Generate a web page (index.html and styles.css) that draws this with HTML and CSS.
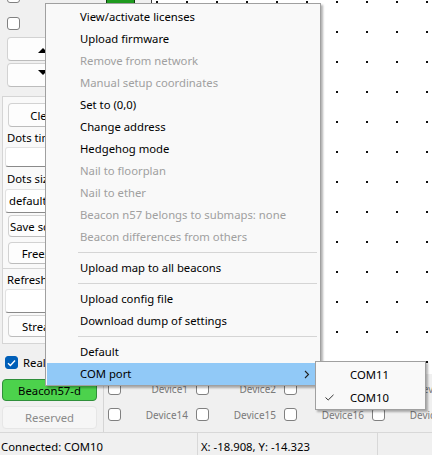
FILE: index.html
```html
<!DOCTYPE html>
<html>

	<head>
		<meta charset="UTF-8">
		<title>Dashboard</title>
		<link rel="stylesheet" href="styles.css">
	</head>

	<body>
		<div class="app">
			<div class="side">
				<div class="top">
					<span class="chk first"></span>
					<span class="chk"></span>
					<div class="btn arrow"><span class="tri up"></span></div>
					<div class="btn arrow"><span class="tri down"></span></div>
				</div>
				<div class="group">
					<div class="btn clear">Clear</div>
					<div class="lbl">Dots time</div>
					<div class="field small"></div>
					<div class="lbl">Dots size</div>
					<div class="field combo">default</div>
					<div class="btn save">Save screenshot</div>
					<div class="btn freeze">Freeze</div>
				</div>
				<div class="group last">
					<div class="lbl">Refresh</div>
					<div class="field"></div>
					<div class="btn stream">Stream</div>
				</div>
				<div class="check-row">
					<span class="chk on">
						<svg width="9" height="8" viewBox="0 0 9 8"><path d="M1 4.2 L3.4 6.4 L8 1.5" fill="none" stroke="#fff" stroke-width="1.4"/></svg>
					</span>
					<span>Realtime</span>
				</div>
				<div class="beacon">Beacon57-d</div>
				<div class="reserved">Reserved</div>
			</div>

			<div class="main">
				<div class="view">
					<div class="tools"><span class="green"></span></div>
					<div class="canvas"></div>
				</div>
				<div class="devices">
					<div class="dev-row">
						<div class="dev"><span class="chk"></span><span class="name">Device1</span></div>
						<div class="dev"><span class="chk"></span><span class="name">Device2</span></div>
						<div class="dev"><span class="chk"></span><span class="name">Device3</span></div>
						<div class="dev"><span class="chk"></span><span class="name">Device4</span></div>
					</div>
					<div class="dev-row">
						<div class="dev"><span class="chk"></span><span class="name">Device14</span></div>
						<div class="dev"><span class="chk"></span><span class="name">Device15</span></div>
						<div class="dev"><span class="chk"></span><span class="name">Device16</span></div>
						<div class="dev"><span class="chk"></span><span class="name">Device17</span></div>
					</div>
				</div>
			</div>

			<div class="status">
				<div class="sb-cell conn">Connected: COM10</div>
				<div class="sb-cell pos">X: -18.908, Y: -14.323</div>
				<div class="sb-cell"></div>
			</div>
		</div>

		<!-- context menu of the beacon -->
		<div class="menu">
			<div class="item">View/activate licenses</div>
			<div class="item">Upload firmware</div>
			<div class="item off">Remove from network</div>
			<div class="item off">Manual setup coordinates</div>
			<div class="item">Set to (0,0)</div>
			<div class="item">Change address</div>
			<div class="item">Hedgehog mode</div>
			<div class="item off">Nail to floorplan</div>
			<div class="item off">Nail to ether</div>
			<div class="item off">Beacon n57 belongs to submaps: none</div>
			<div class="item off">Beacon differences from others</div>
			<div class="sep"></div>
			<div class="item">Upload map to all beacons</div>
			<div class="sep"></div>
			<div class="item">Upload config file</div>
			<div class="item">Download dump of settings</div>
			<div class="sep"></div>
			<div class="item">Default</div>
			<div class="item hover">COM port
				<svg class="more" width="6" height="9" viewBox="0 0 6 9"><path d="M1 1 L4.5 4.5 L1 8" fill="none" stroke="#222" stroke-width="1.1"/></svg>
			</div>
		</div>

		<div class="submenu">
			<div class="item"><span class="mark"></span>COM11</div>
			<div class="item"><span class="mark"><svg width="9" height="7" viewBox="0 0 9 7"><path d="M0.5 3.5 L3.2 6 L8.5 0.8" fill="none" stroke="#333" stroke-width="1"/></svg></span>COM10</div>
		</div>
	</body>

</html>
```

FILE: styles.css
```css
* {
	box-sizing: border-box;
}

body {
	margin: 0;
	width: 432px;
	height: 455px;
	overflow: hidden;
	position: relative;
	background: #f0f0f0;
	color: #000;
	font-family: "Noto Sans", "DejaVu Sans", sans-serif;
	font-size: 11.3px;
}

.app {
	display: grid;
	grid-template-columns: 103px 1fr;
	grid-template-rows: 432px 23px;
	height: 455px;
}

/* left panel */
.side {
	display: flex;
	flex-direction: column;
	align-items: flex-start;
	overflow: hidden;
}

.top {
	height: 96px;
	padding-left: 7px;
	display: flex;
	flex-direction: column;
	align-items: flex-start;
}

.chk {
	display: block;
	flex: none;
	width: 13px;
	height: 13px;
	border: 1px solid #808080;
	border-radius: 3px;
	background: #fff;
}

.chk.first {
	margin-top: -10px;
}

.top .chk + .chk {
	margin-top: 14px;
}

.btn {
	height: 22px;
	width: 72px;
	margin-left: 4px;
	border: 1px solid #d2d2d2;
	border-bottom-color: #bcbcbc;
	border-radius: 4px;
	background: #fdfdfd;
	display: flex;
	align-items: center;
	justify-content: center;
	white-space: nowrap;
	overflow: hidden;
}

.btn.arrow {
	margin-left: 0;
	height: 24px;
	margin-top: 7px;
}

.btn.arrow + .btn.arrow {
	margin-top: 2px;
}

.tri {
	width: 0;
	height: 0;
	border-left: 5px solid transparent;
	border-right: 5px solid transparent;
}

.tri.up {
	border-bottom: 5px solid #000;
	margin-top: 2px;
}

.tri.down {
	border-top: 5px solid #000;
	margin-top: -5px;
}

.group {
	align-self: stretch;
	margin-left: 2px;
	padding: 0 0 0 1px;
	border-top: 1px solid #d5d5d5;
	border-left: 1px solid #d5d5d5;
	background: #f9f9f9;
	display: flex;
	flex-direction: column;
	align-items: flex-start;
}

.group.last {
	border-bottom: 1px solid #d5d5d5;
	padding-bottom: 6px;
}

.btn.clear {
	margin-top: 6px;
	height: 24px;
}

.btn.save {
	margin-top: 2px;
	width: 90px;
}

.btn.freeze {
	margin-top: 5px;
	width: 62px;
	margin-bottom: 4px;
}

.btn.stream {
	margin-top: 2px;
	width: 66px;
}

.lbl {
	margin-top: 3px;
	padding-left: 3px;
	height: 16px;
	line-height: 16px;
	white-space: nowrap;
}

.field {
	margin-top: 1px;
	margin-left: 1px;
	width: 92px;
	height: 24px;
	background: #fff;
	border: 1px solid #e2e2e2;
	border-bottom-color: #8a8a8a;
	border-radius: 3px;
	padding-left: 3px;
	line-height: 22px;
}

.field.small {
	height: 20px;
	margin-bottom: 1px;
}

.field.combo {
	margin-top: 2px;
}

.check-row {
	margin: 12px 0 0 5px;
	display: flex;
	align-items: center;
	gap: 5px;
	height: 13px;
	white-space: nowrap;
}

.chk.on {
	background: #005fb8;
	border-color: #005fb8;
	display: flex;
	align-items: center;
	justify-content: center;
}

.beacon {
	margin: 10px 0 0 2px;
	width: 95px;
	height: 22px;
	background: #4cd24c;
	border: 1px solid #2f8f3a;
	border-radius: 4px;
	text-align: center;
	line-height: 22px;
}

.reserved {
	margin: 5px 0 0 2px;
	width: 95px;
	height: 23px;
	background: #f6f6f6;
	border: 1px solid #e6e6e6;
	border-radius: 4px;
	color: #8a8a8a;
	text-align: center;
	line-height: 21px;
}

/* map and devices */
.main {
	display: flex;
	flex-direction: column;
	overflow: hidden;
}

.view {
	height: 374px;
	display: flex;
}

.tools {
	width: 48px;
	padding-left: 3px;
}

.green {
	display: block;
	width: 29px;
	height: 25px;
	margin-top: -20px;
	background: #1f9a1f;
	border: 1px solid #0c3d0c;
}

.canvas {
	flex: 1;
	background-color: #fff;
	border-left: 1px solid #3a3a3a;
	background-image: radial-gradient(circle at 1px 1px, #111 0.9px, transparent 1.4px);
	background-size: 30px 30px;
	background-position: 4px 1px;
}

.devices {
	flex: 1;
	border-left: 1px solid #d5d5d5;
	padding-top: 2px;
	display: flex;
	flex-direction: column;
	gap: 1px;
}

.dev-row {
	display: flex;
	height: 25px;
}

.dev {
	flex: none;
	width: 88px;
	padding: 0 4px;
	display: flex;
	align-items: center;
}

.dev .name {
	flex: 1;
	text-align: right;
	color: #7a7a7a;
	font-size: 10px;
}

/* status bar */
.status {
	grid-column: 1 / 3;
	border-top: 1px solid #d8d8d8;
	display: flex;
}

.sb-cell {
	padding: 6px 0 0 1px;
	line-height: 16px;
	white-space: nowrap;
}

.sb-cell.conn {
	width: 198px;
	border-right: 1px solid #d8d8d8;
}

.sb-cell.pos {
	width: 180px;
	padding-left: 3px;
	border-right: 1px solid #d8d8d8;
}

/* popup menus */
.menu,
.submenu {
	position: absolute;
	background: #f9f9f9;
	border: 1px solid #a0a0a0;
	box-shadow: 2px 2px 2px rgba(0, 0, 0, 0.3);
}

.menu {
	left: 45px;
	top: 3px;
	width: 276px;
	padding-top: 2px;
}

.menu .item {
	height: 22px;
	line-height: 22px;
	padding-left: 33px;
	margin: 0 1px;
	white-space: nowrap;
	display: flex;
	align-items: center;
}

.menu .item.off {
	color: #a0a0a0;
}

.menu .item.hover {
	background: #91c9f7;
}

.more {
	margin-left: auto;
	margin-right: 9px;
}

.sep {
	height: 1px;
	margin: 4px 3px 4px 32px;
	background: #d5d5d5;
}

.submenu {
	left: 315px;
	top: 361px;
	width: 111px;
	padding-top: 1px;
}

.submenu .item {
	height: 23px;
	display: flex;
	align-items: center;
	padding-left: 9px;
}

.mark {
	width: 25px;
	display: flex;
	align-items: center;
}
```
